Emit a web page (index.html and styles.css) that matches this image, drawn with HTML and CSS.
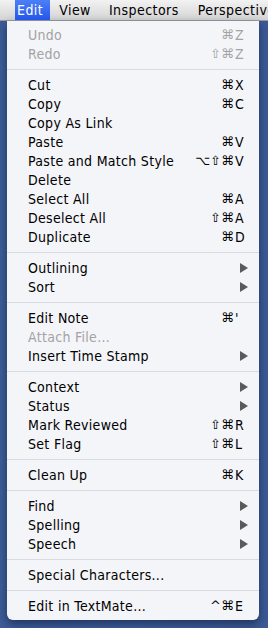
FILE: index.html
```html
<!DOCTYPE html>
<html>
<head>
<meta charset="utf-8">
<link rel="stylesheet" href="styles.css">
</head>
<body>
<div class="menubar">
  <span class="mb-item mb-active">Edit</span>
  <span class="mb-item">View</span>
  <span class="mb-item">Inspectors</span>
  <span class="mb-item">Perspectives</span>
</div>
<div class="menu">
  <div class="row dis"><span class="label">Undo</span><span class="mods">⌘</span><span class="key">Z</span></div>
  <div class="row dis"><span class="label">Redo</span><span class="mods">⇧⌘</span><span class="key">Z</span></div>
  <div class="sep"></div>
  <div class="row"><span class="label">Cut</span><span class="mods">⌘</span><span class="key">X</span></div>
  <div class="row"><span class="label">Copy</span><span class="mods">⌘</span><span class="key">C</span></div>
  <div class="row"><span class="label">Copy As Link</span></div>
  <div class="row"><span class="label">Paste</span><span class="mods">⌘</span><span class="key">V</span></div>
  <div class="row"><span class="label">Paste and Match Style</span><span class="mods">⌥⇧⌘</span><span class="key">V</span></div>
  <div class="row"><span class="label">Delete</span></div>
  <div class="row"><span class="label">Select All</span><span class="mods">⌘</span><span class="key">A</span></div>
  <div class="row"><span class="label">Deselect All</span><span class="mods">⇧⌘</span><span class="key">A</span></div>
  <div class="row"><span class="label">Duplicate</span><span class="mods">⌘</span><span class="key">D</span></div>
  <div class="sep"></div>
  <div class="row"><span class="label">Outlining</span><span class="key sub"><svg width="8" height="10" viewBox="0 0 8 10"><path d="M0 0L8 5L0 10Z"/></svg></span></div>
  <div class="row"><span class="label">Sort</span><span class="key sub"><svg width="8" height="10" viewBox="0 0 8 10"><path d="M0 0L8 5L0 10Z"/></svg></span></div>
  <div class="sep"></div>
  <div class="row"><span class="label">Edit Note</span><span class="mods">⌘</span><span class="key">'</span></div>
  <div class="row dis"><span class="label">Attach File...</span></div>
  <div class="row"><span class="label">Insert Time Stamp</span><span class="key sub"><svg width="8" height="10" viewBox="0 0 8 10"><path d="M0 0L8 5L0 10Z"/></svg></span></div>
  <div class="sep"></div>
  <div class="row"><span class="label">Context</span><span class="key sub"><svg width="8" height="10" viewBox="0 0 8 10"><path d="M0 0L8 5L0 10Z"/></svg></span></div>
  <div class="row"><span class="label">Status</span><span class="key sub"><svg width="8" height="10" viewBox="0 0 8 10"><path d="M0 0L8 5L0 10Z"/></svg></span></div>
  <div class="row"><span class="label">Mark Reviewed</span><span class="mods">⇧⌘</span><span class="key">R</span></div>
  <div class="row"><span class="label">Set Flag</span><span class="mods">⇧⌘</span><span class="key">L</span></div>
  <div class="sep"></div>
  <div class="row"><span class="label">Clean Up</span><span class="mods">⌘</span><span class="key">K</span></div>
  <div class="sep"></div>
  <div class="row"><span class="label">Find</span><span class="key sub"><svg width="8" height="10" viewBox="0 0 8 10"><path d="M0 0L8 5L0 10Z"/></svg></span></div>
  <div class="row"><span class="label">Spelling</span><span class="key sub"><svg width="8" height="10" viewBox="0 0 8 10"><path d="M0 0L8 5L0 10Z"/></svg></span></div>
  <div class="row"><span class="label">Speech</span><span class="key sub"><svg width="8" height="10" viewBox="0 0 8 10"><path d="M0 0L8 5L0 10Z"/></svg></span></div>
  <div class="sep"></div>
  <div class="row"><span class="label">Special Characters...</span></div>
  <div class="sep"></div>
  <div class="row"><span class="label">Edit in TextMate...</span><span class="mods">^⌘</span><span class="key">E</span></div>
</div>
</body>
</html>
```

FILE: styles.css
```css
html, body {
  margin: 0;
  padding: 0;
}
body {
  width: 268px;
  height: 628px;
  overflow: hidden;
  background: linear-gradient(90deg, #3d5c97 0%, #3f5e9a 50%, #3c5a95 100%);
  font-family: "DejaVu Sans Condensed", "DejaVu Sans", sans-serif;
  font-size: 14px;
  color: #000;
}
.menubar {
  height: 21px;
  box-sizing: border-box;
  background: linear-gradient(#f2f2f2, #d4d4d4);
  border-bottom: 1px solid #9c9c9c;
  display: flex;
  align-items: stretch;
  padding-left: 15px;
  white-space: nowrap;
  letter-spacing: 0.45px;
  overflow: hidden;
}
.mb-item {
  display: flex;
  align-items: center;
  padding: 0 9px 0 9px;
  line-height: 20px;
}
.mb-item:nth-child(3) {
  padding-right: 10px;
}
.mb-active {
  padding: 0 7px 0 2px;
  color: #fff;
  background: linear-gradient(#4d80f6, #2356ea);
}
.menu {
  width: 252px;
  margin-left: 7px;
  box-sizing: border-box;
  background: #f4f5f9;
  padding: 4px 0 5px;
  border-radius: 0 0 6px 6px;
  box-shadow: 0 4px 10px rgba(10, 20, 50, 0.55);
  letter-spacing: 0.3px;
}
.row {
  display: flex;
  align-items: center;
  height: 19px;
  padding: 0 11px 0 21px;
  white-space: nowrap;
}
.label {
  flex: 1;
}
.mods {
  text-align: right;
  font-family: "DejaVu Sans", sans-serif;
  font-size: 13px;
  letter-spacing: 0;
}
.key {
  width: 14px;
  text-align: left;
  padding-left: 1px;
  box-sizing: border-box;
}
.key.sub {
  margin-left: auto;
  display: flex;
  justify-content: flex-end;
}
.key.sub svg {
  fill: #5a5a5a;
}
.dis {
  color: #a3a3a3;
}
.sep {
  height: 12px;
  display: flex;
  align-items: center;
}
.sep::before {
  content: "";
  display: block;
  width: 100%;
  height: 1px;
  background: #dadbe0;
}
```
